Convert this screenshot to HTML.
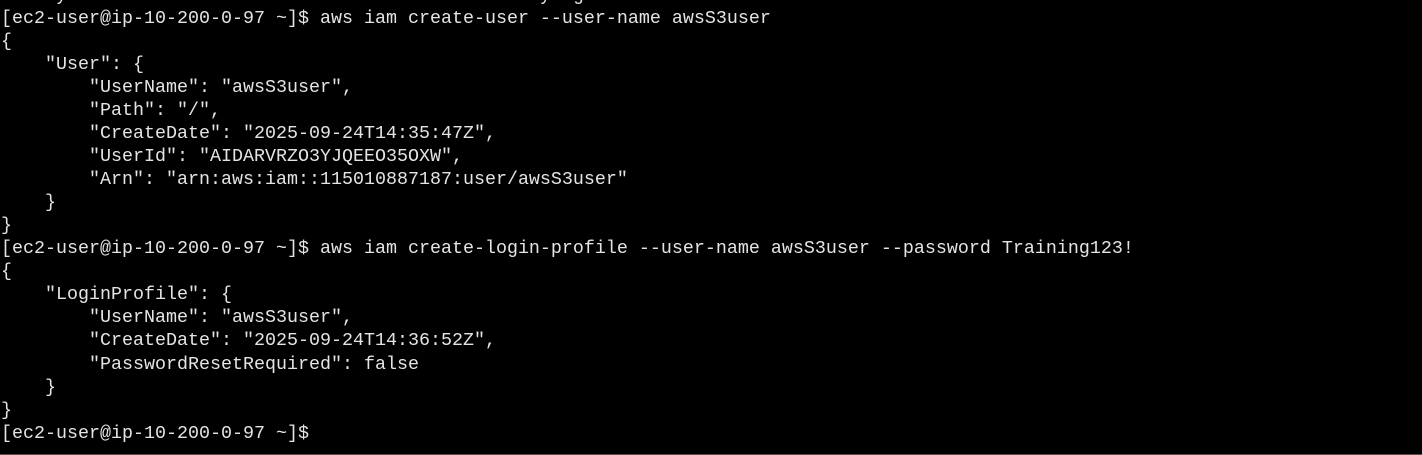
<!DOCTYPE html>
<html><head><meta charset="utf-8"><style>
html,body{margin:0;padding:0;background:#000;width:1422px;height:455px;overflow:hidden}
pre{position:absolute;left:1px;top:-16.5px;margin:0;font-family:"Liberation Mono","Courier New",monospace;font-size:18.33px;line-height:23.06px;color:#e4e4e4;white-space:pre}
.b{position:absolute;left:0;bottom:0;width:1422px;height:1px;background:#5a5048}
</style></head><body>
<pre>the system. Please select a different name and try again.
[ec2-user@ip-10-200-0-97 ~]$ aws iam create-user --user-name awsS3user
{
    "User": {
        "UserName": "awsS3user",
        "Path": "/",
        "CreateDate": "2025-09-24T14:35:47Z",
        "UserId": "AIDARVRZO3YJQEEO35OXW",
        "Arn": "arn:aws:iam::115010887187:user/awsS3user"
    }
}
[ec2-user@ip-10-200-0-97 ~]$ aws iam create-login-profile --user-name awsS3user --password Training123!
{
    "LoginProfile": {
        "UserName": "awsS3user",
        "CreateDate": "2025-09-24T14:36:52Z",
        "PasswordResetRequired": false
    }
}
[ec2-user@ip-10-200-0-97 ~]$</pre>
<div class="b"></div>
</body></html>
